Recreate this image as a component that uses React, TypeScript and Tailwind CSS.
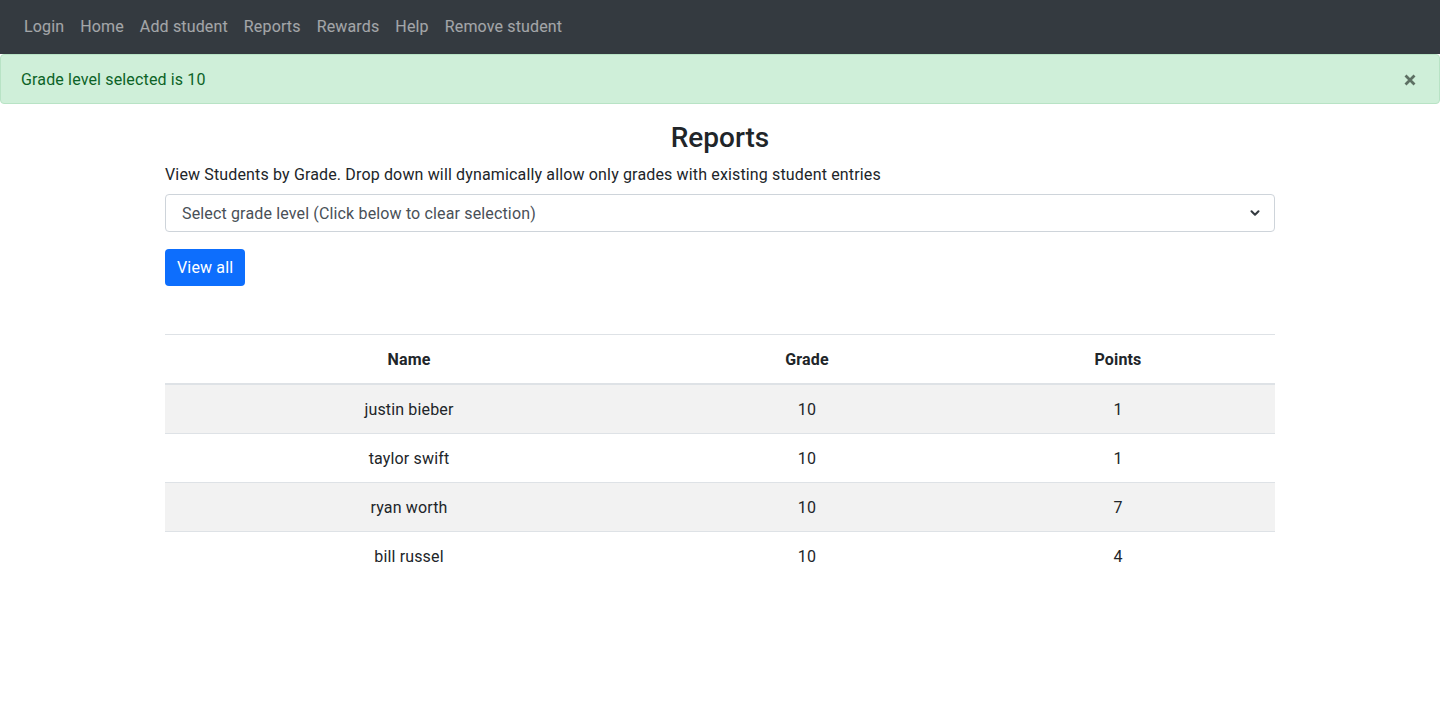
import { ChevronDown } from "lucide-react";

const links = ["Login", "Home", "Add student", "Reports", "Rewards", "Help", "Remove student"];

const students = [
  { name: "justin bieber", grade: 10, points: 1 },
  { name: "taylor swift", grade: 10, points: 1 },
  { name: "ryan worth", grade: 10, points: 7 },
  { name: "bill russel", grade: 10, points: 4 },
];

export default function App() {
  return (
    <div className="min-h-[708px] bg-white text-[#212529] font-['Roboto',sans-serif] text-base tracking-[0.15px]">
      {/* navbar */}
      <nav className="h-[54px] bg-[#343a40] flex items-center pl-4">
        {links.map((l) => (
          <a key={l} className="px-2 text-white/55 leading-6 cursor-pointer">
            {l}
          </a>
        ))}
      </nav>

      {/* alert */}
      <div className="h-[50px] bg-[#cfefd9] border border-[#b8e3c5] rounded text-[#0c6327] flex items-center justify-between pl-5 pr-[23px]">
        <span className="pt-[2px]">Grade level selected is 10</span>
        <svg width="12" height="12" viewBox="0 0 12 12" className="text-[#5d7063] mt-[2px]">
          <path d="M1.5 1.5l9 9M10.5 1.5l-9 9" stroke="currentColor" strokeWidth="2.8" />
        </svg>
      </div>

      <div className="w-[1110px] mx-auto">
        <h3 className="text-[28px] font-medium leading-[1.2] text-center mt-[17px] tracking-normal">Reports</h3>
        <p className="mt-[8px] leading-6">
          View Students by Grade. Drop down will dynamically allow only grades with existing student entries
        </p>

        <div className="mt-[7px] h-[38px] border border-[#ced4da] rounded flex items-center justify-between pl-4 pr-3 text-[#495057]">
          <span className="pt-[2px]">Select grade level (Click below to clear selection)</span>
          <ChevronDown size={14} strokeWidth={3.5} className="text-[#343a40]" />
        </div>

        <button className="mt-[17px] h-[37px] px-3 pt-[2px] bg-[#0d6efd] text-white rounded leading-6">View all</button>

        <table className="mt-12 w-full border-collapse border-t border-[#dee2e6]">
          <colgroup>
            <col className="w-[488px]" />
            <col className="w-[308px]" />
            <col />
          </colgroup>
          <thead>
            <tr className="h-[50px] border-b-2 border-[#dee2e6]">
              <th className="font-bold pt-[2px]">Name</th>
              <th className="font-bold pt-[2px]">Grade</th>
              <th className="font-bold pt-[2px]">Points</th>
            </tr>
          </thead>
          <tbody>
            {students.map((s, i) => (
              <tr
                key={s.name}
                className={`h-[49px] ${i < students.length - 1 ? "border-b border-[#dee2e6]" : ""} ${i % 2 === 0 ? "bg-[#f2f2f2]" : "bg-white"}`}
              >
                <td className="text-center pt-[2px]">{s.name}</td>
                <td className="text-center pt-[2px]">{s.grade}</td>
                <td className="text-center pt-[2px]">{s.points}</td>
              </tr>
            ))}
          </tbody>
        </table>
      </div>
    </div>
  );
}
